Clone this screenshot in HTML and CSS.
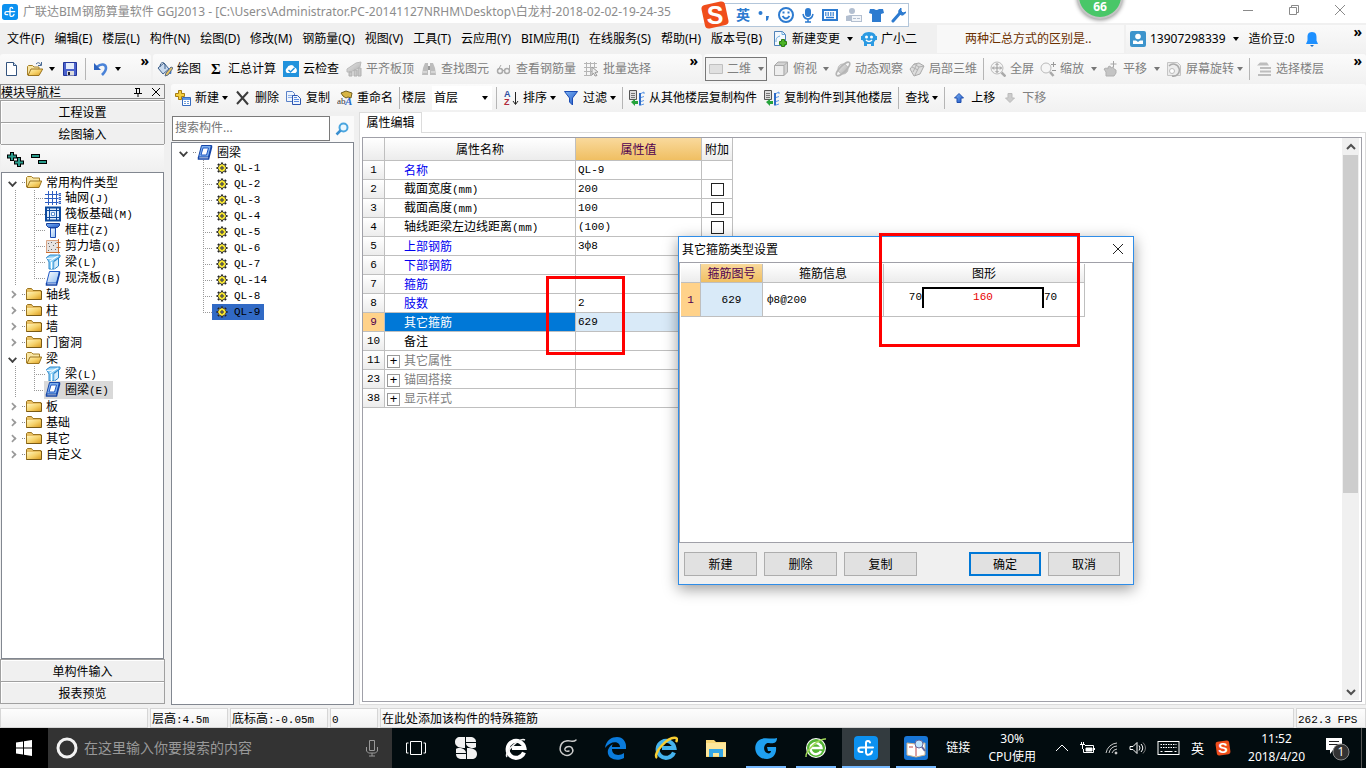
FILE: index.html
```html
<!DOCTYPE html>
<html lang="zh-CN">
<head>
<meta charset="utf-8">
<title>广联达BIM钢筋算量软件 GGJ2013</title>
<link rel="stylesheet" href="styles.css">
</head>
<body>
<svg class="defs" aria-hidden="true">
  <defs>
    <linearGradient id="gold" x1="0" y1="0" x2="1" y2="1"><stop offset="0" stop-color="#fff3b8"/><stop offset=".5" stop-color="#f6d26b"/><stop offset="1" stop-color="#d99a1e"/></linearGradient>
    <linearGradient id="blue" x1="0" y1="0" x2="1" y2="1"><stop offset="0" stop-color="#7db4f5"/><stop offset="1" stop-color="#1f55c4"/></linearGradient>
    <linearGradient id="grey" x1="0" y1="0" x2="1" y2="1"><stop offset="0" stop-color="#e8e8e8"/><stop offset="1" stop-color="#b0b0b0"/></linearGradient>
    <linearGradient id="pane" x1="0" y1="0" x2="1" y2="1"><stop offset="0" stop-color="#ffffff"/><stop offset="1" stop-color="#8fbdf0"/></linearGradient>
  </defs>
  <symbol id="app" viewBox="0 0 24 24"><rect width="24" height="24" rx="4" fill="#0c91f0"/><path d="M16 6.500c-.5-2-4-2-4 .5v9.500c0 3.500 5.500 2.500 6-1M19 11.500H7c-3.500 0-3.500 4.500 0 4.500h1.500" fill="none" stroke="#fff" stroke-width="2" stroke-linecap="round"/></symbol>
  <symbol id="folder" viewBox="0 0 16 16"><path d="M.5 13.500V3.500l1-1h4l1.500 2h8v9z" fill="#e9c063" stroke="#9a7420"/><path d="M1 6h14v7.500H1z" fill="url(#gold)"/><path d="M15.500 5v8.500H.5" fill="none" stroke="#7a5a14"/></symbol>
  <symbol id="folder-open" viewBox="0 0 16 16"><path d="M.5 13V3.500l1-1h4l1.500 1.500h6.500v3" fill="#f9e6a4" stroke="#a68028"/><path d="M1 13.500 4 7h11.700L13 13.500z" fill="url(#gold)" stroke="#9a7420"/></symbol>
  <symbol id="folder-up" viewBox="0 0 16 16"><path d="M.5 14V5.500l1-1h4l1.500 1.500h5v3" fill="#f9e6a4" stroke="#a68028"/><path d="M1 14.500 4 8h11.700L12 14.500z" fill="url(#gold)" stroke="#9a7420"/><path d="M9 3q3-3 5 1M14.500 1v3.500H11" fill="none" stroke="#4a6a94"/></symbol>
  <symbol id="grid" viewBox="0 0 16 16"><path d="M3.500 1v14M7.500 1v14M11.500 1v14M0 4.500h13M0 8.500h13M0 12.500h13" stroke="#2f5fc2" fill="none"/><path d="M14 3.500h2v2h-2zM14 7.500h2v2h-2zM14 11.500h2v2h-2z" fill="none" stroke="#2f5fc2"/></symbol>
  <symbol id="raft" viewBox="0 0 16 16"><path fill="#dcebfb" stroke="#0d4a9e" stroke-width="2" d="M1 1.500h14v13H1z"/><path d="M4.500 4.500h7v7h-7zM4.500 1v14M11.500 1v14M1 4.500h14M1 11.500h14" fill="none" stroke="#0d4a9e"/><path d="M6.500 6.500h3v3h-3z" fill="#fff" stroke="#5a8fd0"/></symbol>
  <symbol id="col" viewBox="0 0 16 16"><path d="M1.500 1.500h13v2l-2 2h-9l-2-2z" fill="url(#blue)" stroke="#173f99"/><path d="M5.500 6h5v9.500h-5z" fill="url(#pane)" stroke="#1b4cb3"/></symbol>
  <symbol id="wall" viewBox="0 0 16 16"><path d="M1.500 2.500h12v12h-12z" fill="#e6e2e0" stroke="#d9a585"/><path d="M13.500 1v14.500M11.500 4.500h4M11.500 9.500h4M1 14.500h14" stroke="#c96f32"/><path d="M3 5h1v1H3zM6 4h1v1H6zM8 7h1v1H8zM4 8h1v1H4zM6 11h1v1H6zM10 11h1v1h-1zM3 12h1v1H3zM10 5h1v1h-1z" fill="#666"/></symbol>
  <symbol id="beam" viewBox="0 0 16 16"><path d="M1.500 3.500 5 1h10v2l-6 4v8H4V8z" fill="#8fd0f6" stroke="#2c86c8"/><path d="M9.500 7.500 13.500 4v8l-4 3" fill="#d5edfc" stroke="#2c86c8"/><path d="m2 4.500 7-.5 4-2M5 7l6-4M6.500 8v7" stroke="#fff" fill="none"/></symbol>
  <symbol id="slab" viewBox="0 0 16 16"><path d="M4.500 1.500h10l-3 11.500h-10z" fill="url(#pane)" stroke="#2058c4"/><path d="M1.500 13v2h10l3-11.500v-2" fill="none" stroke="#1646a8" stroke-width="1.500"/></symbol>
  <symbol id="ring" viewBox="0 0 16 16"><path d="M4.500 1.500h10l-3 11.500h-10z" fill="#7dafed" stroke="#1646a8"/><path d="M6 4h5.500l-2 7H4z" fill="#fff" stroke="#2058c4"/><path d="M1.500 13v2h10l3-11.500v-2" fill="none" stroke="#1646a8" stroke-width="1.500"/></symbol>
  <symbol id="gear" viewBox="0 0 12 12"><path d="M6 .500v11M.500 6h11M2 2l8 8M10 2l-8 8" stroke="#222" stroke-width="2.200"/><circle cx="6" cy="6" r="4" fill="#f7e733" stroke="#555"/><path d="M6 2v8M2 6h8" stroke="#f7e733"/><path d="M5 5h2v2H5z" fill="#fff" stroke="#222"/></symbol>
  <symbol id="page" viewBox="0 0 16 16"><path d="M2.500 1.500h7l3 3v10h-10z" fill="#fff" stroke="#34547e"/><path d="M9.500 1.500v3h3" fill="#cfe0f5" stroke="#34547e"/></symbol>
  <symbol id="save" viewBox="0 0 16 16"><path d="M1.500 1.500h13v13h-13z" fill="#4a62cc" stroke="#22359a"/><path d="M4 2h8v6H4z" fill="#e4ecfb"/><path d="M5 10h7v4.500H5z" fill="#dcdcdc"/><path d="M6 11h2v3H6z" fill="#223"/></symbol>
  <symbol id="undo" viewBox="0 0 16 16"><path d="M4 6c4-4 9-3 9 1 0 3-2 5-4 7" fill="none" stroke="#4a83d8" stroke-width="2.600"/><path d="M1 2v7h7z" fill="#2c63c0"/></symbol>
  <symbol id="paint" viewBox="0 0 16 16"><path d="m1 7 6-5 5 6-6 5z" fill="#c9daee" stroke="#3d5f8a"/><path d="M3 6c0-5 4-6 5-2v4" fill="none" stroke="#3d5f8a"/><path d="M11 8c4 1 2 4 2 5" stroke="#3b75c9" stroke-width="2" fill="none"/><path d="m8 15 1-3 5-6 2 1-5 7z" fill="#e9c463" stroke="#5b6d86"/></symbol>
  <symbol id="cloud" viewBox="0 0 16 16"><rect width="16" height="16" fill="#2292dc"/><path d="M4 12a3 3 0 0 1 0-5 4 4 0 0 1 7.500-.500A3 3 0 0 1 12.500 12z" fill="#fff"/><path d="m5.500 9 2 2 4-4" fill="none" stroke="#2292dc" stroke-width="1.500"/></symbol>
  <symbol id="level" viewBox="0 0 16 16"><path d="m1 8 9-6 5-1-1 5-9 5H1z" fill="url(#grey)" stroke="#bbb"/><path d="M3 11h3v4H3zM8 9h3v6H8zM12 7h3v8h-3z" fill="#c9c9c9" stroke="#b0b0b0"/></symbol>
  <symbol id="binoc" viewBox="0 0 16 16"><path d="M2 7l2-5h3v12H1zM14 7l-2-5H9v12h6z" fill="#bdbdbd"/><path d="M7 5h2v4H7z" fill="#999"/><path d="M2 11h4M10 11h4" stroke="#eee"/></symbol>
  <symbol id="glasses" viewBox="0 0 16 16"><circle cx="4" cy="10" r="2.500" fill="none" stroke="#aaa" stroke-width="1.500"/><circle cx="11" cy="10" r="2.500" fill="none" stroke="#aaa" stroke-width="1.500"/><path d="M2 9 5 4M13.500 9V4M6 9.500h3" stroke="#aaa" fill="none"/></symbol>
  <symbol id="batch" viewBox="0 0 16 16"><path d="M1 2.500h13M1 6.500h13M1 10.500h8M1 14.500h8M3.500 1v14M7.500 1v14M11.500 1v6" stroke="#b5b5b5" fill="none"/><path d="m9 6 6 5-3 .5 2 3-2 .5-1.500-3L9 14z" fill="#eee" stroke="#999"/></symbol>
  <symbol id="flat" viewBox="0 0 16 16"><path d="M1.500 3.500h13v9h-13z" fill="#e0e0e0" stroke="#c0c0c0"/></symbol>
  <symbol id="cube" viewBox="0 0 16 16"><path d="M1.500 4.500 5 1h9.500v10L11 14.500H1.500z" fill="#d2d2d2" stroke="#aaa"/><path d="M2 5h8.500v9H2z" fill="#eee"/><path d="M1.500 4.500H11v10M11 4.500 14.500 1" stroke="#aaa" fill="none"/></symbol>
  <symbol id="orbit" viewBox="0 0 16 16"><circle cx="8" cy="8" r="5" fill="url(#grey)" stroke="#bbb"/><ellipse cx="8" cy="8" rx="9" ry="3" transform="rotate(-45 8 8)" fill="none" stroke="#b5b5b5" stroke-width="1.500"/></symbol>
  <symbol id="part3d" viewBox="0 0 16 16"><path d="m1 8 4-5 5-1 5 3-4 8-6 2z" fill="#ddd" stroke="#aaa"/><path d="m5 3 5 3 5-1M10 6l-4 8M3 6l6 3M8 3 4 11" fill="none" stroke="#b0b0b0"/></symbol>
  <symbol id="full" viewBox="0 0 16 16"><circle cx="7" cy="7" r="6" fill="#f3f3f3" stroke="#bbb"/><path d="M7 2.500v9M2.500 7h9M5.500 4 7 2.500 8.500 4M5.500 10 7 11.500 8.500 10M4 5.500 2.500 7 4 8.500M10 5.500 11.500 7 10 8.500" stroke="#999" fill="none"/><path d="m11.500 11.500 4 4" stroke="#aaa" stroke-width="2.500"/></symbol>
  <symbol id="zoomi" viewBox="0 0 16 16"><circle cx="6" cy="7" r="5" fill="#f6f6f6" stroke="#bbb"/><path d="m10 11 3.500 4" stroke="#aaa" stroke-width="2.500"/><path d="M11 3.500h5M13.500 1v5M12 9.500h4" stroke="#999"/></symbol>
  <symbol id="pan" viewBox="0 0 16 16"><path d="M3 15v-4L1 8l2-1 2 1V6l2-1 1 2 2-1 1 2 2 1v3l-2 3z" fill="#c4c4c4" stroke="#b0b0b0"/><path d="M10.500 0v6M7.500 3h6" stroke="#a5a5a5"/></symbol>
  <symbol id="rot" viewBox="0 0 16 16"><path d="M1.500 1.500h10l3 3v10h-13z" fill="#ececec" stroke="#c4c4c4"/><path d="M3 5a6 6 0 1 1 3 10" fill="none" stroke="#aaa" stroke-width="1.500"/><circle cx="6" cy="10" r="2.500" fill="#fff" stroke="#bbb"/></symbol>
  <symbol id="floors" viewBox="0 0 16 16"><path d="M1 4.500 4 1.500h7l2 3zM4 6h11v2H4zM4 9.500h11v2H4zM2 13h13v2H2z" fill="#bdbdbd"/></symbol>
  <symbol id="new" viewBox="0 0 16 16"><path d="M3.500.5h3v3h3v3h-3v3h-3v-3h-3v-3h3z" fill="#f4cf3c" stroke="#a67d12"/><path d="M7.500 7.500h8v8h-8z" fill="#fff" stroke="#376cc0"/><path d="M8 8h7v2H8z" fill="#5e97e6"/><path d="M9 11.500h2M12 11.500h2M9 13.500h2M12 13.500h2" stroke="#6f9edc"/></symbol>
  <symbol id="del" viewBox="0 0 16 16"><path d="m2 1.500 11 13M13 2 2 14" stroke="#3c3c3c" stroke-width="2"/></symbol>
  <symbol id="copy" viewBox="0 0 16 16"><path d="M.5 1.500h6l2 2v8h-8z" fill="#eef4fd" stroke="#5a82c8"/><path d="M2 5.500h5M2 7.500h5" stroke="#8fb0e6"/><path d="M6.500 5.500h5l3 3v6h-8z" fill="#eef4fd" stroke="#2c55b0"/><path d="M8 9.500h5M8 11.500h5M8 7.500h3" stroke="#5b8be0"/></symbol>
  <symbol id="filter" viewBox="0 0 16 16"><path d="M1.500 1.500h13L9.500 8v7L6.500 12V8z" fill="url(#blue)" stroke="#1b4cb3"/></symbol>
  <symbol id="from" viewBox="0 0 16 16"><path d="M.5.500h7v9h-7z" fill="#ddd" stroke="#555"/><path d="M2 3.500h4M2 5.500h4M2 7.500h4" stroke="#777"/><path d="M12 3.500 15 2v2M12 7.500l3-1M12 11.500l3-1M12 15l3-1" stroke="#5b97e6" fill="none"/><path d="M11 3v12.500" stroke="#2f6cc8" stroke-width="2"/><path d="m2 12 4-3v2h3v3H6v2z" fill="#25a33b"/></symbol>
  <symbol id="up" viewBox="0 0 16 16"><path d="M8 3.500 12.500 8H10v4.500H6V8H3.500z" fill="url(#blue)" stroke="#1f4fae"/></symbol>
  <symbol id="down" viewBox="0 0 16 16"><path d="M8 12.500 12.500 8H10V3.500H6V8H3.500z" fill="#ccc" stroke="#bbb"/></symbol>
  <symbol id="change" viewBox="0 0 16 16"><path d="M2.500.5h8l3 3v11h-11z" fill="#f3f8fd" stroke="#4f82b8"/><path d="M10 .5v3h3M4 11c0-4 1-5 4-6" fill="none" stroke="#69a9dc"/><path d="M9.500 8.500h3v2h2v3h-2v2h-3v-2h-2v-3h2z" fill="#4cb427" stroke="#2c7f10"/></symbol>
  <symbol id="robot" viewBox="0 0 16 16"><path d="M8 1c5 0 7 3 7 5 0 3-1 4-2 5v4h-3v-2H6v2H3v-4C2 10 1 9 1 6c0-2 2-5 7-5z" fill="#2b9ae2"/><path d="M0 5h2v4H0zM14 5h2v4h-2z" fill="#2b9ae2"/><circle cx="5.500" cy="6" r="1.500" fill="#fff"/><circle cx="10.500" cy="6" r="1.500" fill="#fff"/><path d="M5 9q3 3 6 0" fill="none" stroke="#fff" stroke-width="1.500"/></symbol>
  <symbol id="user" viewBox="0 0 16 16"><rect width="16" height="16" rx="2" fill="#3d94cc"/><circle cx="8" cy="5.500" r="2.800" fill="#fff"/><path d="M3 13V9.500h3L8 11l2-1.500h3V13z" fill="#fff"/></symbol>
  <symbol id="bell" viewBox="0 0 14 16"><path d="M7 1c4 0 4.500 3 4.500 5v3.500L13 13H1l1.500-3.500V6C2.500 4 3 1 7 1z" fill="#1e90ff"/><path d="M5 14h4l-2 2z" fill="#1e70c8"/></symbol>
  <symbol id="lens" viewBox="0 0 16 16"><circle cx="9.500" cy="6.500" r="4" fill="#eaf7ff" stroke="#4aa5df" stroke-width="2"/><path d="m6.500 9.500-4 4" stroke="#3a8fd0" stroke-width="2.500"/></symbol>
  <symbol id="key" viewBox="0 0 22 14"><rect x=".5" y=".5" width="21" height="13" fill="none" stroke="currentColor"/><path d="M3 3.500h16M3 6.500h16" stroke="currentColor" stroke-dasharray="1.500 1"/><path d="M3 10.500h2M7 10.500h8M17 10.500h2" stroke="currentColor"/></symbol>
  <symbol id="e" viewBox="0 0 24 24"><path d="M20 16.500A8.500 8.500 0 1 1 20.500 12H8" fill="none" stroke="currentColor" stroke-width="4"/></symbol>
  <symbol id="swirl" viewBox="0 0 24 24"><path d="M22 4c-3 3-5 0-10 1-6 1-8 10-3 13 5 4 12-1 9-6-2-3-8-1-7 2 1 2 4 1 4 1" fill="none" stroke="currentColor" stroke-width="var(--sw)" stroke-linecap="round"/></symbol>
</svg>

<header class="titlebar">
  <svg class="i16"><use href="#app"/></svg>
  <h1 class="title">广联达BIM钢筋算量软件 GGJ2013 - [C:\Users\Administrator.PC-20141127NRHM\Desktop\白龙村-2018-02-02-19-24-35</h1>
  <div class="winctl">
    <button aria-label="最小化"><svg width="12" height="12"><path d="M1 6.500h10" stroke="#8a8a8a"/></svg></button>
    <button aria-label="还原"><svg width="12" height="12" fill="none" stroke="#8a8a8a"><path d="M1.500 3.500h7v7h-7zM3.500 3V1.500h7v7H9"/></svg></button>
    <button aria-label="关闭"><svg width="12" height="12"><path d="m1 1 10 10M11 1 1 11" stroke="#8a8a8a"/></svg></button>
  </div>
</header>

<nav class="menubar">
  <div class="menus">
    <button>文件(F)</button><button>编辑(E)</button><button>楼层(L)</button><button>构件(N)</button><button>绘图(D)</button><button>修改(M)</button><button>钢筋量(Q)</button><button>视图(V)</button><button>工具(T)</button><button>云应用(Y)</button><button>BIM应用(I)</button><button>在线服务(S)</button><button>帮助(H)</button><button>版本号(B)</button>
    <button class="tb"><svg class="i16"><use href="#change"/></svg>新建变更<i class="caret far"></i></button>
    <button class="tb"><svg class="i16"><use href="#robot"/></svg>广小二</button>
  </div>
  <a class="tip" href="#">两种汇总方式的区别是..</a>
  <div class="account">
    <button class="tb"><svg class="i16"><use href="#user"/></svg>13907298339<i class="caret far"></i></button>
    <span>造价豆:0</span>
    <button aria-label="通知"><svg width="14" height="16"><use href="#bell"/></svg></button>
    <button class="more" aria-label="更多">»</button>
  </div>
</nav>

<div class="toolbars">
  <div class="bar files">
    <button aria-label="新建工程"><svg class="i16"><use href="#page"/></svg></button>
    <button class="tb" aria-label="打开"><svg class="i16"><use href="#folder-up"/></svg><i class="caret"></i></button>
    <button aria-label="保存"><svg class="i16"><use href="#save"/></svg></button>
    <i class="sep"></i>
    <button class="tb" aria-label="撤销"><svg class="i16"><use href="#undo"/></svg><i class="caret"></i></button>
    <button class="more" aria-label="更多">»</button>
  </div>
  <div class="bar draw">
    <button class="tb"><svg class="i16"><use href="#paint"/></svg>绘图</button>
    <button class="tb"><b class="sigma">Σ</b>汇总计算</button>
    <button class="tb"><svg class="i16"><use href="#cloud"/></svg>云检查</button>
    <button class="tb" disabled><svg class="i16"><use href="#level"/></svg>平齐板顶</button>
    <button class="tb" disabled><svg class="i16"><use href="#binoc"/></svg>查找图元</button>
    <button class="tb" disabled><svg class="i16"><use href="#glasses"/></svg>查看钢筋量</button>
    <button class="tb" disabled><svg class="i16"><use href="#batch"/></svg>批量选择</button>
    <button class="more" aria-label="更多">»</button>
  </div>
  <div class="bar view">
    <label class="dim"><svg class="i16"><use href="#flat"/></svg><select aria-label="视图维度" disabled><option>二维</option></select><i class="caret"></i></label>
    <button class="tb" disabled><svg class="i16"><use href="#cube"/></svg>俯视<i class="caret"></i></button>
    <button class="tb" disabled><svg class="i16"><use href="#orbit"/></svg>动态观察</button>
    <button class="tb" disabled><svg class="i16"><use href="#part3d"/></svg>局部三维</button>
    <i class="sep"></i>
    <button class="tb" disabled><svg class="i16"><use href="#full"/></svg>全屏</button>
    <button class="tb" disabled><svg class="i16"><use href="#zoomi"/></svg>缩放<i class="caret far"></i></button>
    <button class="tb" disabled><svg class="i16"><use href="#pan"/></svg>平移<i class="caret far"></i></button>
    <button class="tb" disabled><svg class="i16"><use href="#rot"/></svg>屏幕旋转<i class="caret near"></i></button>
    <i class="sep"></i>
    <button class="tb" disabled><svg class="i16"><use href="#floors"/></svg>选择楼层</button>
    <button class="more" aria-label="更多">»</button>
  </div>
</div>

<main class="work">
  <aside class="dock">
    <div class="dockhead"><h2>模块导航栏</h2>
      <button aria-label="固定"><svg width="10" height="10" fill="none" stroke="#000"><path d="M3.500 1v5M2 1.500h5M6.500 1v5M1 6.500h8M5 6.500V10"/></svg></button>
      <button aria-label="关闭"><svg width="10" height="10"><path d="m1 1 8 8M9 1 1 9" stroke="#000"/></svg></button>
    </div>
    <button class="section">工程设置</button>
    <button class="section">绘图输入</button>
    <div class="expand">
      <button aria-label="展开全部"><svg width="18" height="16"><path d="M5 1v9M0 5.500h10M12 6v10M7 11.500h10" stroke="#000" stroke-width="4"/><path d="M5 2v7M1 5.500h8M12 7v8M8 11.500h8" stroke="#2a9c8c" stroke-width="2"/></svg></button>
      <button aria-label="折叠全部"><svg width="18" height="16"><path d="M1 5h9M8 11h9" stroke="#000" stroke-width="4"/><path d="M2 5h7M9 11h7" stroke="#2a9c8c" stroke-width="2"/></svg></button>
    </div>
    <ul class="tree nav">
      <li><button class="tw open" aria-label="折叠"></button><i class="stub"></i><svg class="i16"><use href="#folder-open"/></svg><span>常用构件类型</span></li>
      <li><i class="rail"></i><i class="elbow"></i><svg class="i16"><use href="#grid"/></svg><span>轴网<b>(J)</b></span></li>
      <li><i class="rail"></i><i class="elbow"></i><svg class="i16"><use href="#raft"/></svg><span>筏板基础<b>(M)</b></span></li>
      <li><i class="rail"></i><i class="elbow"></i><svg class="i16"><use href="#col"/></svg><span>框柱<b>(Z)</b></span></li>
      <li><i class="rail"></i><i class="elbow"></i><svg class="i16"><use href="#wall"/></svg><span>剪力墙<b>(Q)</b></span></li>
      <li><i class="rail"></i><i class="elbow"></i><svg class="i16"><use href="#beam"/></svg><span>梁<b>(L)</b></span></li>
      <li><i class="rail"></i><i class="elbow last"></i><svg class="i16"><use href="#slab"/></svg><span>现浇板<b>(B)</b></span></li>
      <li><button class="tw" aria-label="展开"></button><i class="stub"></i><svg class="i16"><use href="#folder"/></svg><span>轴线</span></li>
      <li><button class="tw" aria-label="展开"></button><i class="stub"></i><svg class="i16"><use href="#folder"/></svg><span>柱</span></li>
      <li><button class="tw" aria-label="展开"></button><i class="stub"></i><svg class="i16"><use href="#folder"/></svg><span>墙</span></li>
      <li><button class="tw" aria-label="展开"></button><i class="stub"></i><svg class="i16"><use href="#folder"/></svg><span>门窗洞</span></li>
      <li><button class="tw open" aria-label="折叠"></button><i class="stub"></i><svg class="i16"><use href="#folder-open"/></svg><span>梁</span></li>
      <li><i class="rail"></i><i class="elbow"></i><svg class="i16"><use href="#beam"/></svg><span>梁<b>(L)</b></span></li>
      <li><i class="rail"></i><i class="elbow last"></i><span class="picked"><svg class="i16"><use href="#ring"/></svg><span>圈梁<b>(E)</b></span></span></li>
      <li><button class="tw" aria-label="展开"></button><i class="stub"></i><svg class="i16"><use href="#folder"/></svg><span>板</span></li>
      <li><button class="tw" aria-label="展开"></button><i class="stub"></i><svg class="i16"><use href="#folder"/></svg><span>基础</span></li>
      <li><button class="tw" aria-label="展开"></button><i class="stub"></i><svg class="i16"><use href="#folder"/></svg><span>其它</span></li>
      <li><button class="tw" aria-label="展开"></button><i class="stub"></i><svg class="i16"><use href="#folder"/></svg><span>自定义</span></li>
    </ul>
    <button class="section">单构件输入</button>
    <button class="section">报表预览</button>
  </aside>

  <div class="right">
    <div class="bar edit">
      <button class="tb"><svg class="i16"><use href="#new"/></svg>新建<i class="caret near"></i></button>
      <button class="tb"><svg class="i16"><use href="#del"/></svg>删除</button>
      <button class="tb"><svg class="i16"><use href="#copy"/></svg>复制</button>
      <button class="tb"><svg class="i16" viewBox="0 0 16 16"><path d="m4 3 5-2 6 2-1 5-3-1-2 1-3-2z" fill="#d8b545" stroke="#705f20"/><text x="0" y="14" font-family="Liberation Serif" font-size="9" fill="#333">ab</text><text x="8" y="15" font-family="Liberation Serif" font-size="11" font-style="italic" font-weight="bold" fill="#2d6bc8">A</text></svg>重命名</button>
      <i class="sep"></i>
      <label class="floor">楼层<select><option>首层</option></select><i class="caret"></i></label>
      <i class="sep"></i>
      <button class="tb"><svg class="i16" viewBox="0 0 16 16"><text x="1" y="7" font-family="Liberation Sans" font-weight="bold" font-size="9" fill="#2d4ea2">A</text><text x="1" y="15" font-family="Liberation Sans" font-weight="bold" font-size="9" fill="#b02a3c">Z</text><path d="M12.500 2v12M10 11l2.500 3.500L15 11" fill="none" stroke="#222"/></svg>排序<i class="caret near"></i></button>
      <button class="tb"><svg class="i16"><use href="#filter"/></svg>过滤<i class="caret near"></i></button>
      <i class="sep"></i>
      <button class="tb"><svg class="i16"><use href="#from"/></svg>从其他楼层复制构件</button>
      <button class="tb"><svg class="i16"><use href="#from"/></svg>复制构件到其他楼层</button>
      <i class="sep"></i>
      <button class="tb">查找<i class="caret near"></i></button>
      <i class="sep"></i>
      <button class="tb"><svg class="i16"><use href="#up"/></svg>上移</button>
      <button class="tb" disabled><svg class="i16"><use href="#down"/></svg>下移</button>
    </div>
    <div class="panes">
      <section class="members">
        <div class="search"><input type="text" placeholder="搜索构件..." aria-label="搜索构件"><button aria-label="搜索"><svg class="i16"><use href="#lens"/></svg></button></div>
        <ul class="tree list">
          <li><button class="tw open" aria-label="折叠"></button><i class="stub"></i><svg class="i16"><use href="#ring"/></svg><span>圈梁</span></li>
          <li><i class="elbow"></i><span class="leaf"><svg class="i12"><use href="#gear"/></svg>QL-1</span></li>
          <li><i class="elbow"></i><span class="leaf"><svg class="i12"><use href="#gear"/></svg>QL-2</span></li>
          <li><i class="elbow"></i><span class="leaf"><svg class="i12"><use href="#gear"/></svg>QL-3</span></li>
          <li><i class="elbow"></i><span class="leaf"><svg class="i12"><use href="#gear"/></svg>QL-4</span></li>
          <li><i class="elbow"></i><span class="leaf"><svg class="i12"><use href="#gear"/></svg>QL-5</span></li>
          <li><i class="elbow"></i><span class="leaf"><svg class="i12"><use href="#gear"/></svg>QL-6</span></li>
          <li><i class="elbow"></i><span class="leaf"><svg class="i12"><use href="#gear"/></svg>QL-7</span></li>
          <li><i class="elbow"></i><span class="leaf"><svg class="i12"><use href="#gear"/></svg>QL-14</span></li>
          <li><i class="elbow"></i><span class="leaf"><svg class="i12"><use href="#gear"/></svg>QL-8</span></li>
          <li><i class="elbow last"></i><span class="leaf chosen"><svg class="i12"><use href="#gear"/></svg>QL-9</span></li>
        </ul>
      </section>
      <section class="props">
        <div class="tabs"><button class="tab">属性编辑</button></div>
        <div class="frame"><div class="sheet">
          <table class="grid prop">
            <colgroup><col class="c-no"><col class="c-name"><col class="c-val"><col class="c-add"></colgroup>
            <thead><tr><th></th><th>属性名称</th><th class="on">属性值</th><th>附加</th></tr></thead>
            <tbody>
              <tr><th>1</th><td class="key blue">名称</td><td class="mono">QL-9</td><td></td></tr>
              <tr><th>2</th><td class="key">截面宽度<b>(mm)</b></td><td class="mono">200</td><td class="chk"><input type="checkbox" aria-label="附加截面宽度"></td></tr>
              <tr><th>3</th><td class="key">截面高度<b>(mm)</b></td><td class="mono">100</td><td class="chk"><input type="checkbox" aria-label="附加截面高度"></td></tr>
              <tr><th>4</th><td class="key">轴线距梁左边线距离<b>(mm)</b></td><td class="mono">(100)</td><td class="chk"><input type="checkbox" aria-label="附加轴线距离"></td></tr>
              <tr><th>5</th><td class="key blue">上部钢筋</td><td class="mono">3ф8</td><td></td></tr>
              <tr><th>6</th><td class="key blue">下部钢筋</td><td></td><td></td></tr>
              <tr><th>7</th><td class="key blue">箍筋</td><td></td><td></td></tr>
              <tr><th>8</th><td class="key blue">肢数</td><td class="mono">2</td><td></td></tr>
              <tr class="sel"><th>9</th><td class="key">其它箍筋</td><td class="mono">629</td><td></td></tr>
              <tr><th>10</th><td class="key">备注</td><td></td><td></td></tr>
              <tr><th>11</th><td class="key fold"><button>+</button>其它属性</td><td></td><td></td></tr>
              <tr><th>23</th><td class="key fold"><button>+</button>锚固搭接</td><td></td><td></td></tr>
              <tr><th>38</th><td class="key fold"><button>+</button>显示样式</td><td></td><td></td></tr>
            </tbody>
          </table>
          <div class="scroll">
            <button aria-label="向上"><svg width="10" height="8"><path d="m1 6 4-4 4 4" fill="none" stroke="#505050" stroke-width="2"/></svg></button>
            <div class="track"><div class="thumb"></div></div>
            <button aria-label="向下"><svg width="10" height="8"><path d="m1 2 4 4 4-4" fill="none" stroke="#505050" stroke-width="2"/></svg></button>
          </div>
        </div></div>
      </section>
    </div>
  </div>
</main>

<footer class="status">
  <span class="s1"></span><span class="s2">层高<b>:4.5m</b></span><span class="s3">底标高<b>:-0.05m</b></span><span class="s4"><b>0</b></span><span class="s5">在此处添加该构件的特殊箍筋</span><span class="s6"><b>262.3 FPS</b></span>
</footer>

<div class="taskbar">
  <button class="start" aria-label="开始"><svg width="16" height="16"><path d="M0 2.500 7 1.500v6H0zM8 1.300 16 0v7.500H8zM0 8.500h7v6l-7-1zM8 8.500h8V16l-8-1.300z" fill="#fff"/></svg></button>
  <label class="cortana"><svg width="22" height="22"><circle cx="11" cy="11" r="9" fill="none" stroke="#f2f2f2" stroke-width="3"/></svg><input type="text" placeholder="在这里输入你要搜索的内容" aria-label="搜索"><svg width="12" height="18" fill="none" stroke="#999"><path d="M3.500 1.500h5v10h-5zM.5 8v4l2 2h7l2-2V8M6 14v3M3 17h6"/></svg></label>
  <div class="apps">
    <button aria-label="任务视图"><svg width="22" height="16" fill="none" stroke="#fff"><path d="M5.500 1.500h11v13h-11zM3.500 3H1.500v10h2M18.500 3h2v10h-2"/></svg></button>
    <button aria-label="风扇"><svg width="24" height="24"><g fill="#f2f2f2"><path d="M11 1v11C6 12 1 11 1 6c0-3 2-5 5-5zM12 1h4c4 0 6 2 6 5H12zM12 7h10v4c-2 2-10 1-10-4zM13 23V12c5 0 10 1 10 6 0 3-2 5-5 5zM12 23H8c-4 0-6-2-6-5h10zM12 17H2v-4c2-2 10-1 10 4z"/></g></svg></button>
    <button aria-label="浏览器"><svg class="i24 white"><use href="#e"/><path d="M3 21C0 17 15 1 21 4" stroke="#f2f2f2" stroke-width="1.500" fill="none"/></svg></button>
    <button aria-label="广联达"><svg class="i24 pale thin"><use href="#swirl"/></svg></button>
    <button aria-label="Edge"><svg class="i24 edge"><path d="M1 12C2 4 8 1 13 1c6 0 9 5 9 9v3H8c0 7 8 7 12 4v5c-7 4-18 1-16-8 1-3 3-5 5-6-1 1-1 2-1 3h8c0-6-9-7-15 1z" fill="currentColor"/></svg></button>
    <button aria-label="Internet Explorer"><svg class="i24 ie"><use href="#e"/><path d="M3 22C-2 18 14 0 22 2q2 1 0 4" fill="none" stroke="#f7ce33" stroke-width="2.500"/></svg></button>
    <button aria-label="文件资源管理器"><svg width="22" height="20"><path d="M1 2h8l2 2h10v15H1z" fill="#f8d775"/><path d="M1 5h20v13H1z" fill="#fde79b"/><path d="M4 11h14v8h-4v-4H8v4H4z" fill="#35a7e5"/></svg></button>
    <button class="run" aria-label="广联达云"><svg class="i24"><path d="M23 2c0 5-4 6-8 5-5-1-7 8-2 10 2 1 4 0 4-2h-3l-1-4h9c1 8-4 12-9 12C2 23-2 11 4 5c5-5 13-1 19-3z" fill="#1fa0f0"/></svg></button>
    <button class="run" aria-label="360浏览器"><svg class="i24"><circle cx="12" cy="12" r="10" fill="#fff"/><circle cx="12" cy="12" r="9" fill="#54b435"/><path d="M17 15a5.500 5.500 0 1 1 .5-3H7" fill="none" stroke="#fff" stroke-width="2.500"/><path d="M2 21C1 15 15 2 22 3" stroke="#a3db5a" stroke-width="1.500" fill="none"/></svg></button>
    <button class="run active" aria-label="GGJ2013"><svg class="i24"><use href="#app"/></svg></button>
    <button class="run" aria-label="图片查看"><svg class="i24"><rect width="24" height="24" rx="3" fill="#1876d6"/><path d="m3 7 9 1 9-1v12l-9 2-9-2z" fill="#fff" stroke="#d2b48c"/><path d="M12 8v12M5 11h4" stroke="#b44"/><circle cx="15" cy="8" r="4" fill="#bfe6ff" stroke="#669"/><path d="m18 11 3 4" stroke="#669" stroke-width="2"/></svg></button>
  </div>
  <div class="tray">
    <span class="links">链接</span>
    <span class="cpu">30%<br>CPU使用</span>
    <button aria-label="显示隐藏的图标"><svg width="14" height="10"><path d="m1 8 6-6 6 6" fill="none" stroke="#fff"/></svg></button>
    <button aria-label="电源"><svg width="16" height="14" fill="none" stroke="#fff"><path d="M6 4.500h8.500v7H4.500V8M15.500 7v2M1 3.500h5M2.500 1v2M4.500 1v2M3.500 4v4"/><path d="M7 7h6v3H7z" fill="#fff"/></svg></button>
    <button aria-label="网络"><svg width="14" height="14" fill="none" stroke="#ccc"><path d="M1 12A12 12 0 0 1 12 2M4 12a9 9 0 0 1 8-7M7 12a6 6 0 0 1 5-4"/><circle cx="11" cy="12" r="1" fill="#fff"/></svg></button>
    <button aria-label="音量"><svg width="18" height="14" fill="none" stroke="#fff"><path d="M1 5.500h3l4-4v11l-4-4H1zM10 4.500q2 2.500 0 5M12 3q3.500 4 0 8"/><path d="M14 1.500q5 5.500 0 11" stroke="#777"/></svg></button>
    <button class="white" aria-label="触摸键盘"><svg width="23" height="14"><use href="#key"/></svg></button>
    <span class="ime">英</span>
    <button aria-label="搜狗输入法"><svg class="i16" viewBox="0 0 28 28"><rect x="2" y="2" width="24" height="24" rx="4" fill="#f04e1b" transform="rotate(-8 14 14)"/><text x="14" y="23" font-family="Liberation Sans" font-weight="bold" font-size="25" fill="#fff" text-anchor="middle">S</text></svg></button>
    <span class="clock">11:52<br>2018/4/20</span>
    <button aria-label="通知中心"><svg width="26" height="26"><path d="M2 3h16v12H9l-3 4v-4H2z" fill="#fff"/><path d="M5 6.500h10M5 9.500h10" stroke="#222"/><circle cx="17" cy="17" r="8" fill="#333" stroke="#888"/><text x="17" y="21" font-family="Open Sans" font-size="12" fill="#fff" text-anchor="middle">1</text></svg></button>
    <i class="peek"></i>
  </div>
</div>

<div class="imebar">
  <svg class="i28" viewBox="0 0 28 28"><rect x="2" y="2" width="24" height="24" rx="4" fill="#f04e1b" transform="rotate(-12 14 14)"/><text x="14" y="23" font-family="Liberation Sans" font-weight="bold" font-size="25" fill="#fff" text-anchor="middle">S</text></svg>
  <b>英</b>
  <svg width="14" height="16"><circle cx="3.500" cy="6" r="2" fill="#2d7bd0"/><path d="M9 9h3l-1 4-2 1z" fill="#2d7bd0"/></svg>
  <svg width="16" height="16" fill="none" stroke="#2d7bd0" stroke-width="2"><circle cx="8" cy="8" r="7"/><path d="M4.500 9q3.500 5 7 0M5.500 4.500v2M10.500 4.500v2"/></svg>
  <svg width="14" height="16"><rect x="4" y="1" width="6" height="9" rx="3" fill="#2d7bd0"/><path d="M2 7q1 5 5 5t5-5M7 12v3M4 15h6" fill="none" stroke="#2d7bd0" stroke-width="1.500"/></svg>
  <svg width="16" height="12" fill="none" stroke="#2d7bd0"><path d="M1 1h14v10H1z" stroke-width="2"/><path d="M3 4h10M3 6h10" stroke-width="1.500" stroke-dasharray="1.500 1"/><path d="M4 8.500h8" stroke-width="1.500"/></svg>
  <svg width="17" height="16"><circle cx="7" cy="4" r="3" fill="#b3bfd0"/><path d="M1 14V9l4-1h5v6z" fill="#b3bfd0"/><rect x="6.500" y="8.500" width="10" height="6" fill="#f2f5f9" stroke="#b3bfd0"/><path d="M8 11.500h3M12 11.500h3" stroke="#b3bfd0"/></svg>
  <svg width="15" height="16"><path d="M1 2h4q2.500 2 5 0h4l1 4-3 1v8H3V7L0 6z" fill="#2d7bd0"/></svg>
  <svg width="15" height="16"><path d="m2 14 7-8" stroke="#2d7bd0" stroke-width="3" stroke-linecap="round"/><path d="M10 1q-4 3-1 6t6-2l-3 1-2-2z" fill="#2d7bd0" stroke="#2d7bd0"/></svg>
</div>
<div class="ball">66</div>

<div class="dialog" role="dialog" aria-labelledby="dlg">
  <div class="dlghead"><h2 id="dlg">其它箍筋类型设置</h2><button aria-label="关闭"><svg width="12" height="12"><path d="m1 1 10 10M11 1 1 11" stroke="#222"/></svg></button></div>
  <div class="dlgbody">
    <table class="grid hoop">
      <colgroup><col class="h-no"><col class="h-id"><col class="h-info"><col class="h-fig"></colgroup>
      <thead><tr><th></th><th class="on">箍筋图号</th><th>箍筋信息</th><th>图形</th></tr></thead>
      <tbody><tr><th class="no">1</th><td class="mono id">629</td><td class="mono info">ф8@200</td><td class="fig"><div class="shape"><span>70</span><span class="hoopline">160</span><span>70</span></div></td></tr></tbody>
    </table>
  </div>
  <div class="dlgfoot">
    <button>新建</button><button>删除</button><button>复制</button><button class="ok">确定</button><button class="cancel">取消</button>
  </div>
</div>
<div class="mark m1"></div>
<div class="mark m2"></div>
</body>
</html>
```

FILE: styles.css
```css
* { box-sizing: border-box; }
body {
  margin: 0; height: 100vh; overflow: hidden; display: flex; flex-direction: column;
  background: #f0f0f0; color: #000;
  font: 12px/16px "Noto Sans", "Noto Sans CJK SC", sans-serif;
}
button, input, select { font: inherit; color: inherit; }
button { border: 0; padding: 0; background: none; white-space: nowrap; }
button:disabled, select:disabled { color: #808080; opacity: 1; }
svg { display: block; flex: none; }
h1, h2 { margin: 0; font: inherit; }
i { flex: none; }
.defs { position: absolute; width: 0; height: 0; }
.i12 { width: 12px; height: 12px; }
.i16 { width: 16px; height: 16px; }
.i24 { width: 24px; height: 24px; }
.i28 { width: 28px; height: 28px; }

.titlebar { height: 23px; flex: none; background: #fff; display: flex; align-items: center; padding-left: 2px; gap: 5px; color: #8c8c8c; }
.title { flex: 1; min-width: 0; white-space: nowrap; overflow: hidden; line-height: 20px; }
.winctl { display: flex; gap: 34px; padding-right: 20px; margin-top: -4px; }

.menubar { height: 31px; flex: none; display: flex; align-items: center; gap: 2px; }
.menus { display: flex; align-items: center; gap: 10px; padding-left: 7px; width: 935px; }
.menus .tb { margin-right: -2px; }
.tip { width: 187px; height: 28px; padding: 6px 28px; background: #f8f8f8; color: #6b3000; text-decoration: none; white-space: nowrap; }
.account { flex: 1; height: 28px; display: flex; align-items: center; gap: 10px; padding: 0 4px; background: linear-gradient(#fafafa, #f1f1f1); }
.tb { display: inline-flex; align-items: center; gap: 4px; }
.caret { width: 0; height: 0; border: 3px solid transparent; border-top: 4px solid #000; border-bottom: 0; margin: 0 0 0 2px; }
.caret.far { margin-left: 3px; }
.caret.near { margin-left: -1px; }
:disabled .caret, .dim .caret { border-top-color: #777; }
.sep { width: 1px; height: 22px; background: #b5b5b5; }
.more { margin-left: auto; align-self: flex-start; font-weight: bold; font-size: 14px; line-height: 12px; padding-top: 1px; }

.toolbars { height: 30px; flex: none; display: flex; gap: 2px; }
.bar { display: flex; align-items: center; gap: 7px; background: linear-gradient(#fbfbfb, #f1f1f1); border-radius: 3px; }
.files { width: 151px; padding: 0 2px 0 4px; gap: 7px; }
.draw { width: 549px; padding: 0 4px; }
.view { flex: 1; padding: 0 4px 0 1px; gap: 6px; }
.sigma { width: 16px; text-align: center; font: bold 15px/16px "Liberation Serif", serif; }
.dim { width: 62px; height: 24px; flex: none; border: 1px solid #777; background: #f3f3f3; display: flex; align-items: center; padding: 0 2px; gap: 3px; }
select { appearance: none; border: 0; background: none; padding: 0; outline: 0; }
.dim select { width: 26px; }

.work { flex: 1; min-height: 0; display: flex; gap: 6px; }
.dock { width: 165px; flex: none; display: flex; flex-direction: column; padding-bottom: 2px; font-family: "Noto Sans CJK SC", sans-serif; }
.dockhead { height: 15px; flex: none; display: flex; align-items: center; gap: 8px; border: 1px solid #8b8b8b; padding-right: 3px; margin-bottom: 1px; }
.dockhead h2 { flex: 1; font-size: 12px; line-height: 13px; }
.section { height: 22px; flex: none; border: 1px solid #a0a0a0; border-width: 1px 1px 0 1px; box-shadow: inset 1px 1px #fff; background: #f0f0f0; }
.section:last-child { height: 23px; border-bottom-width: 1px; }
.expand { height: 28px; flex: none; margin: 0 1px; border-top: 1px solid #a0a0a0; background: linear-gradient(#fafafa, #efefef); display: flex; align-items: center; gap: 5px; padding-left: 6px; }
.tree { list-style: none; margin: 0; padding: 1px 0; background: #fff; border: 1px solid #828790; font-family: "Noto Sans CJK SC", sans-serif; }
.tree.nav { flex: 1; min-height: 0; margin: 0 1px; }
.tree li { height: 16px; display: flex; align-items: center; white-space: nowrap; }
.tree li > span, .picked > span { margin-left: 4px; }
b { font-weight: inherit; }
.tree b, .key b, .status b, .leaf, .mono, .prop th, .no, .shape { font-family: "Liberation Mono", monospace; font-size: 11px; }
.tw { width: 7px; height: 7px; margin: 0 6px 0 7px; border: solid #999; border-width: 2px 2px 0 0; transform: rotate(45deg) scale(.8); }
.tw.open { border-color: #404040; transform: rotate(135deg) scale(.9); }
.stub { width: 4px; height: 1px; background: repeating-linear-gradient(90deg, #888 0 1px, transparent 1px 2px); }
.rail { width: 19px; height: 16px; margin-left: 13px; background: repeating-linear-gradient(#999 0 1px, transparent 1px 2px) 0 0 / 1px 100% no-repeat; }
.elbow { width: 11px; height: 16px; background: repeating-linear-gradient(#999 0 1px, transparent 1px 2px) 0 0 / 1px 100% no-repeat, repeating-linear-gradient(90deg, #999 0 1px, transparent 1px 2px) 0 8px / 100% 1px no-repeat; }
.elbow.last { background-size: 1px 8px, 100% 1px; }
.tree li > .picked { display: flex; margin-left: -1px; padding: 0 4px 0 1px; background: #d9d9d9; }

.right { flex: 1; min-width: 0; display: flex; flex-direction: column; }
.edit { height: 28px; flex: none; padding-left: 4px; }
.edit .sep { margin: 0 -1px; }
.floor { display: flex; align-items: center; gap: 6px; margin-left: -4px; }
.floor select { width: 60px; height: 24px; padding-left: 2px; background: #fff; }
.floor .caret { margin-left: -16px; margin-right: 2px; }
.panes { flex: 1; min-height: 0; display: flex; gap: 5px; padding-bottom: 1px; }
.members { width: 183px; flex: none; display: flex; flex-direction: column; padding-top: 4px; }
.search { height: 26px; flex: none; display: flex; }
.search input { width: 158px; height: 25px; border: 1px solid #7a7a7a; background: #fff; padding: 0 2px 3px; margin-left: 1px; }
.search button { flex: 1; display: grid; place-items: center; background: #fafafa; }
::placeholder { color: #757575; opacity: 1; }
.list { flex: 1; }
.list .tw { margin-left: 8px; }
.list .elbow { margin-left: 31px; width: 9px; }
.leaf { display: flex; align-items: center; gap: 6px; height: 16px; padding: 0 4px; }
.tree li > .leaf { margin-left: 0; }
.chosen { background: #316ac5; }
.props { flex: 1; min-width: 0; display: flex; flex-direction: column; background: #fff; font-family: "Noto Sans CJK SC", sans-serif; }
.tabs { height: 21px; flex: none; border-bottom: 1px solid #dcdcdc; }
.tab { width: 63px; height: 21px; border: 1px solid #dcdcdc; border-bottom: 0; background: #fff; padding-bottom: 2px; }
.frame { flex: 1; min-height: 0; padding: 4px 3px 2px 2px; border: 1px solid #dcdcdc; border-top: 0; }
.sheet { height: 100%; border: 1px solid #a0a0a8; display: flex; justify-content: space-between; padding: 0 2px 1px 0; }
.grid { border-collapse: separate; border-spacing: 0; table-layout: fixed; }
.grid th, .grid td { padding: 0; font-weight: normal; border: solid #bfbfbf; border-width: 0 1px 1px 0; overflow: hidden; white-space: nowrap; }
.grid th { background: linear-gradient(#fff, #ececec); }
.grid thead th { font-family: inherit; font-size: 12px; }
.grid thead th.on { background: linear-gradient(#f9d99c, #f0bf62); color: #500050; }
.prop { width: 370px; align-self: flex-start; }
.c-no { width: 22px; } .c-name { width: 191px; } .c-val { width: 126px; } .c-add { width: 31px; }
.prop thead th { height: 23px; }
.prop tbody th, .prop td { height: 19px; line-height: 16px; }
.grid td.key { padding-left: 19px; }
.grid td.mono { padding-left: 2px; }
.blue { color: #0000f0; }
.chk input { appearance: none; display: block; width: 13px; height: 13px; margin: 0 auto; border: 1px solid #222; background: #fff; }
.grid .sel th, .grid th.no { background: #ffd28a; color: #500050; }
.sel td { background: #d9eaf8; }
.sel td.key { background: #0078d7; color: #fff; }
.grid td.fold { padding-left: 2px; color: #808080; }
.fold button { width: 13px; height: 13px; margin-right: 4px; border: 1px solid #999; color: #000; font: 13px/10px "Liberation Sans", sans-serif; vertical-align: 0; }
.scroll { width: 17px; background: #f0f0f0; display: flex; flex-direction: column; }
.scroll button { height: 17px; display: grid; place-items: center; }
.track { flex: 1; }
.thumb { height: 64%; margin: 0 1px; background: #cdcdcd; }

.status { height: 22px; flex: none; display: flex; gap: 2px; padding-top: 2px; font-family: "Noto Sans CJK SC", sans-serif; }
.status span { border: 1px solid #d6d6d6; background: linear-gradient(#fdfdfd, #f1f1f1); padding-left: 1px; line-height: 18px; white-space: nowrap; overflow: hidden; }
.s1 { width: 148px; } .s2 { width: 78px; } .s3 { width: 98px; } .s4 { width: 48px; } .s5 { flex: 1; } .s6 { width: 70px; }

.taskbar { height: 40px; flex: none; display: flex; background: #020c0f; color: #fff; }
.start { width: 48px; display: grid; place-items: center; background: #000; }
.cortana { width: 344px; background: #333; display: flex; align-items: center; gap: 6px; padding: 0 14px 0 8px; }
.cortana input { flex: 1; min-width: 0; border: 0; padding: 0; background: none; font-size: 14px; line-height: 20px; }
.cortana ::placeholder { color: #999; }
.apps { display: flex; gap: 2px; }
.apps button { width: 48px; height: 40px; display: grid; place-items: center; }
.apps .run { background: linear-gradient(#76b9ff, #76b9ff) 50% 100% / 40px 2px no-repeat; }
.apps .active { background: linear-gradient(#76b9ff, #76b9ff) 50% 100% / 48px 2px no-repeat, #333b3f; }
.white { color: #fff; } .pale { color: #ccc; } .edge { color: #0a7bdc; } .ie { color: #45b3ed; }
.thin { --sw: 1.500; }
.tray { margin-left: auto; display: flex; align-items: center; gap: 12px; padding-right: 4px; white-space: nowrap; }
.tray > button { margin: 0 -1px; }
.cpu, .clock { text-align: center; line-height: 18px; padding: 0 8px 0 6px; }
.ime { font-size: 13px; }
.peek { width: 1px; height: 40px; background: #555; }

.imebar { position: absolute; left: 701px; top: 0; height: 28px; display: flex; align-items: center; gap: 7px; padding: 2px 3px 0 0; color: #2d7bd0; background: linear-gradient(#b3c6da, #b3c6da) 14px 3px / calc(100% - 14px) 1px no-repeat, linear-gradient(#b3c6da, #b3c6da) 14px 26px / calc(100% - 14px) 1px no-repeat, linear-gradient(#b3c6da, #b3c6da) 100% 3px / 1px 24px no-repeat, linear-gradient(#fff, #fff) 14px 3px / 100% 23px no-repeat; }
.imebar b { font-weight: bold; font-size: 14px; }
.ball { position: absolute; left: 1077px; top: -27px; width: 46px; height: 46px; border-radius: 50%; background: #49c768; border: 2px solid #c4c4c4; box-shadow: 0 1px 4px #888; color: #fff; font-weight: bold; text-align: center; padding-top: 24px; }

.dialog { position: absolute; left: 678px; top: 236px; width: 456px; height: 349px; border: 1px solid #2f8de8; background: #f0f0f0; box-shadow: 0 4px 14px rgba(0, 0, 0, .4); display: flex; flex-direction: column; font-family: "Noto Sans CJK SC", sans-serif; }
.dlghead { height: 25px; flex: none; background: #fff; display: flex; justify-content: space-between; align-items: center; padding: 0 9px 2px 3px; }
.dlgbody { flex: 1; background: #fff; border: 1px solid #a0a0a8; padding: 1px 0 0 1px; }
.hoop { width: 404px; }
.h-no { width: 20px; } .h-id { width: 62px; } .h-info { width: 121px; } .h-fig { width: 201px; }
.hoop thead th { height: 19px; line-height: 16px; }
.hoop tbody tr { height: 34px; }
.grid td.id { background: #d9eaf8; text-align: center; padding: 0; }
.grid td.info { padding-left: 4px; }
.grid td.fig { vertical-align: top; }
.shape { display: flex; justify-content: center; line-height: 16px; height: 26px; padding: 4px 2px 0 0; }
.shape span { padding-top: 2px; }
.shape .hoopline { width: 122px; height: 21px; padding: 0; border: solid #000; border-width: 2px 2px 0; text-align: center; color: #e80000; }
.dlgfoot { height: 41px; flex: none; display: flex; align-items: center; gap: 7px; padding: 0 13px 0 5px; }
.dlgfoot button { width: 73px; height: 24px; border: 1px solid #adadad; background: #e1e1e1; }
.dlgfoot .ok, .dlgfoot .cancel { width: 72px; }
.dlgfoot .ok { margin-left: auto; border: 2px solid #0078d7; }
.mark { position: absolute; border: 3px solid #f00; }
.m1 { left: 546px; top: 276px; width: 79px; height: 79px; }
.m2 { left: 879px; top: 233px; width: 201px; height: 114px; }
```
